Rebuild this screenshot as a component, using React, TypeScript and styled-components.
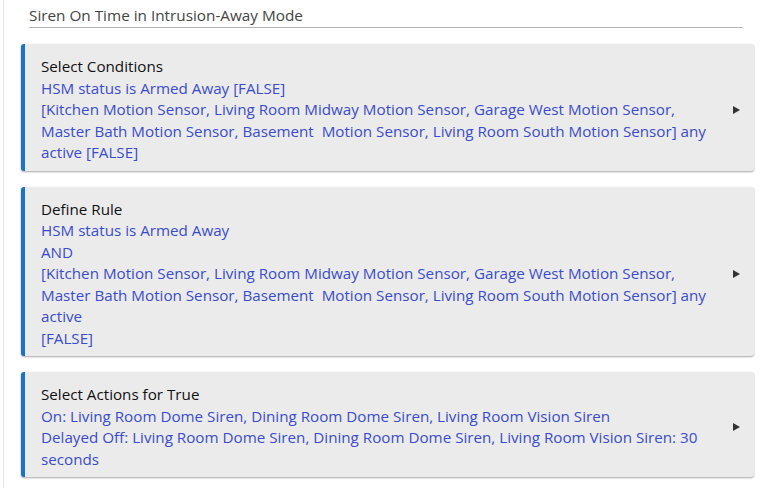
import React from "react";
import styled, { createGlobalStyle } from "styled-components";

const GlobalStyle = createGlobalStyle`
  body {
    margin: 0;
    background: #ffffff;
    font-family: "Open Sans", "Liberation Sans", Arial, sans-serif;
  }
`;

const Page = styled.div`
  width: 763px;
  height: 488px;
  box-sizing: border-box;
  border-left: 1px solid #e4e4e4;
  margin-left: 3px;
  padding: 6px 12px 0 17px;
  overflow: hidden;
`;

const Title = styled.div`
  margin: 0 11px 0 8px;
  padding-bottom: 3px;
  border-bottom: 1px solid #b4b4b4;
  color: #444444;
  font-size: 15.3px;
  line-height: 18px;
`;

const List = styled.div`
  display: flex;
  flex-direction: column;
  gap: 16px;
  margin-top: 16px;
`;

const Card = styled.div`
  display: flex;
  align-items: center;
  background: #ebebeb;
  border-left: 4px solid #1a73c8;
  border-radius: 3px;
  box-shadow: 0 1px 2px rgba(0, 0, 0, 0.35);
  padding: 12px 14px 7px 16px;
`;

const Body = styled.div`
  flex: 1;
  font-size: 15.2px;
  line-height: 21.5px;
`;

const Heading = styled.div`
  color: #111111;
`;

const Line = styled.div`
  color: #3a4bcc;
  white-space: nowrap;
`;

const Arrow = styled.span`
  width: 0;
  height: 0;
  border-top: 4px solid transparent;
  border-bottom: 4px solid transparent;
  border-left: 7px solid #333333;
  margin-left: 8px;
`;

type Section = { heading: string; lines: string[] };

const sections: Section[] = [
  {
    heading: "Select Conditions",
    lines: [
      "HSM status is Armed Away [FALSE]",
      "[Kitchen Motion Sensor, Living Room Midway Motion Sensor, Garage West Motion Sensor,",
      "Master Bath Motion Sensor, Basement\u00a0 Motion Sensor, Living Room South Motion Sensor] any",
      "active [FALSE]",
    ],
  },
  {
    heading: "Define Rule",
    lines: [
      "HSM status is Armed Away",
      "AND",
      "[Kitchen Motion Sensor, Living Room Midway Motion Sensor, Garage West Motion Sensor,",
      "Master Bath Motion Sensor, Basement\u00a0 Motion Sensor, Living Room South Motion Sensor] any",
      "active",
      "[FALSE]",
    ],
  },
  {
    heading: "Select Actions for True",
    lines: [
      "On: Living Room Dome Siren, Dining Room Dome Siren, Living Room Vision Siren",
      "Delayed Off: Living Room Dome Siren, Dining Room Dome Siren, Living Room Vision Siren: 30",
      "seconds",
    ],
  },
];

export default function App() {
  return (
    <>
      <GlobalStyle />
      <Page>
        <Title>Siren On Time in Intrusion-Away Mode</Title>
        <List>
          {sections.map((s) => (
            <Card key={s.heading}>
              <Body>
                <Heading>{s.heading}</Heading>
                {s.lines.map((l, i) => (
                  <Line key={i}>{l}</Line>
                ))}
              </Body>
              <Arrow />
            </Card>
          ))}
        </List>
      </Page>
    </>
  );
}
